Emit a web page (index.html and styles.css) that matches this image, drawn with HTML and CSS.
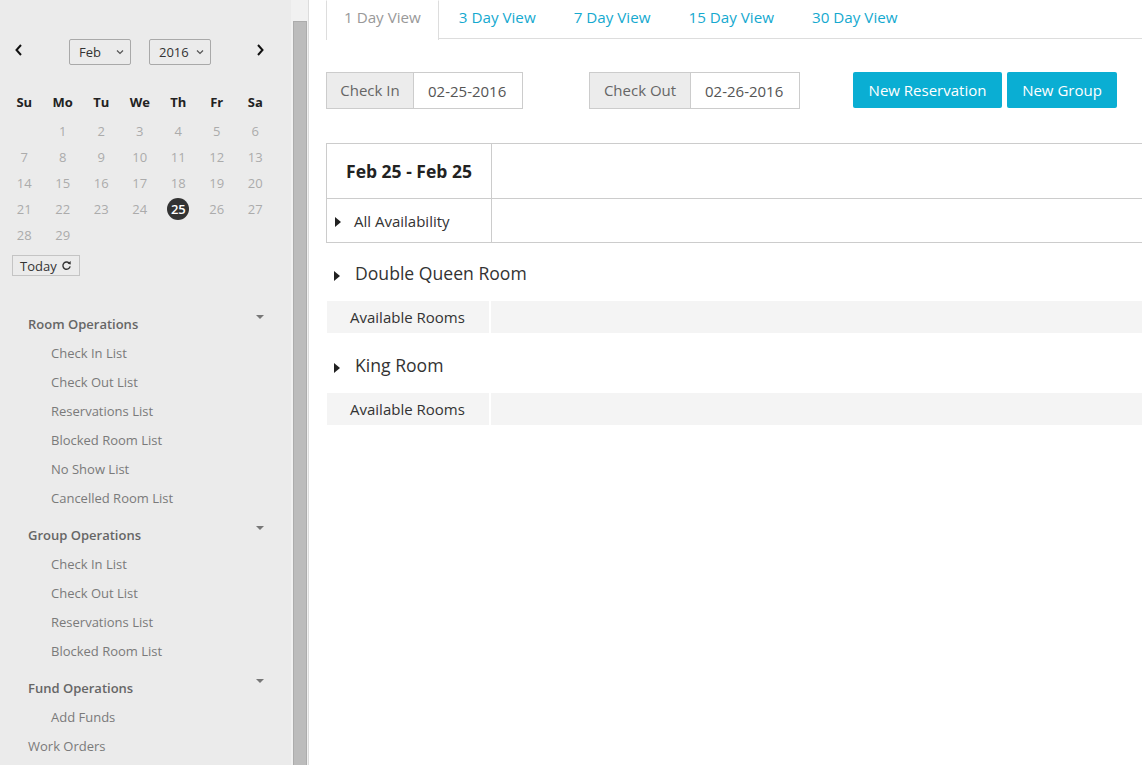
FILE: index.html
```html
<!DOCTYPE html>
<html>
<head>
<meta charset="utf-8">
<link rel="stylesheet" href="styles.css">
</head>
<body>
<div class="layout">
  <aside class="sidebar">
    <div class="cal-head">
      <svg class="nav-arrow" width="10" height="14" viewBox="0 0 10 14"><path d="M7 2 L2.5 7 L7 12" fill="none" stroke="#111" stroke-width="2"/></svg>
      <div class="select sel-month">Feb <svg width="8" height="6" viewBox="0 0 8 6"><path d="M1 1.5 L4 4.5 L7 1.5" fill="none" stroke="#555" stroke-width="1.2"/></svg></div>
      <div class="select sel-year">2016 <svg width="8" height="6" viewBox="0 0 8 6"><path d="M1 1.5 L4 4.5 L7 1.5" fill="none" stroke="#555" stroke-width="1.2"/></svg></div>
      <svg class="nav-arrow next" width="10" height="14" viewBox="0 0 10 14"><path d="M3 2 L7.5 7 L3 12" fill="none" stroke="#111" stroke-width="2"/></svg>
    </div>
    <div class="cal-grid">
      <div class="wd">Su</div><div class="wd">Mo</div><div class="wd">Tu</div><div class="wd">We</div><div class="wd">Th</div><div class="wd">Fr</div><div class="wd">Sa</div>
      <div class="d"></div><div class="d">1</div><div class="d">2</div><div class="d">3</div><div class="d">4</div><div class="d">5</div><div class="d">6</div>
      <div class="d">7</div><div class="d">8</div><div class="d">9</div><div class="d">10</div><div class="d">11</div><div class="d">12</div><div class="d">13</div>
      <div class="d">14</div><div class="d">15</div><div class="d">16</div><div class="d">17</div><div class="d">18</div><div class="d">19</div><div class="d">20</div>
      <div class="d">21</div><div class="d">22</div><div class="d">23</div><div class="d">24</div><div class="d"><span class="sel-day">25</span></div><div class="d">26</div><div class="d">27</div>
      <div class="d">28</div><div class="d">29</div>
    </div>
    <div class="today-btn">Today <svg width="11" height="11" viewBox="0 0 12 12"><path d="M9.6 4.2 A4 4 0 1 0 10 7" fill="none" stroke="#333" stroke-width="1.5"/><path d="M7.2 3.9 L10.6 4.9 L10.6 1.2 Z" fill="#333"/></svg></div>

    <nav class="menu">
      <div class="menu-head first"><span>Room Operations</span><i class="caret"></i></div>
      <div class="menu-item">Check In List</div>
      <div class="menu-item">Check Out List</div>
      <div class="menu-item">Reservations List</div>
      <div class="menu-item">Blocked Room List</div>
      <div class="menu-item">No Show List</div>
      <div class="menu-item">Cancelled Room List</div>
      <div class="menu-head"><span>Group Operations</span><i class="caret"></i></div>
      <div class="menu-item">Check In List</div>
      <div class="menu-item">Check Out List</div>
      <div class="menu-item">Reservations List</div>
      <div class="menu-item">Blocked Room List</div>
      <div class="menu-head"><span>Fund Operations</span><i class="caret"></i></div>
      <div class="menu-item">Add Funds</div>
      <div class="menu-link">Work Orders</div>
    </nav>
  </aside>
  <div class="scroll"><div class="thumb"></div></div>
  <main class="main">
    <ul class="tabs">
      <li class="tab active">1 Day View</li>
      <li class="tab">3 Day View</li>
      <li class="tab">7 Day View</li>
      <li class="tab">15 Day View</li>
      <li class="tab">30 Day View</li>
    </ul>
    <div class="toolbar">
      <div class="group g-in"><span class="addon a-in">Check In</span><span class="field">02-25-2016</span></div>
      <div class="group g-out"><span class="addon a-out">Check Out</span><span class="field">02-26-2016</span></div>
      <div class="btn b-res">New Reservation</div>
      <div class="btn b-grp">New Group</div>
    </div>
    <div class="avail-table">
      <div class="row r-head"><div class="c1 date">Feb 25 - Feb 25</div><div class="c2"></div></div>
      <div class="row r-all"><div class="c1"><i class="tri"></i>All Availability</div><div class="c2"></div></div>
    </div>
    <div class="room-title"><i class="tri"></i>Double Queen Room</div>
    <div class="band"><div class="b1">Available Rooms</div><div class="b2"></div></div>
    <div class="room-title"><i class="tri"></i>King Room</div>
    <div class="band"><div class="b1">Available Rooms</div><div class="b2"></div></div>
  </main>
</div>
</body>
</html>
```

FILE: styles.css
```css
* { box-sizing: border-box; }
html, body { margin: 0; padding: 0; }
body {
  font-family: "Open Sans", "DejaVu Sans", sans-serif;
  width: 1142px;
  height: 765px;
  overflow: hidden;
  background: #fff;
  color: #333;
}
.layout { display: flex; height: 765px; }

/* sidebar */
.sidebar {
  width: 291px;
  flex: none;
  background: #ebebeb;
  padding-top: 39px;
}
.cal-head {
  display: flex;
  align-items: center;
  height: 26px;
  padding-left: 14px;
}
.nav-arrow { display: block; margin-top: -4px; }
.nav-arrow.next { margin-left: 44px; }
.select {
  height: 26px;
  width: 62px;
  border: 1px solid #a9a9a9;
  border-radius: 2px;
  font-size: 13px;
  color: #333;
  display: flex;
  align-items: center;
  justify-content: space-between;
  padding: 0 6px 0 9px;
}
.select svg { display: block; }
.sel-month { margin-left: 45px; }
.sel-year { margin-left: 18px; }

.cal-grid {
  margin-top: 24px;
  margin-left: 5px;
  display: grid;
  grid-template-columns: repeat(7, 38.5px);
  grid-template-rows: 29px;
  grid-auto-rows: 26px;
}
.wd {
  font-size: 13px;
  font-weight: 700;
  color: #222;
  text-align: center;
  line-height: 27px;
}
.d {
  font-size: 13px;
  color: #ababab;
  text-align: center;
  line-height: 26px;
  display: flex;
  align-items: center;
  justify-content: center;
}
.sel-day {
  display: inline-block;
  width: 22px;
  height: 22px;
  border-radius: 50%;
  background: #333;
  color: #fff;
  line-height: 22px;
  font-weight: 600;
  letter-spacing: -0.3px;
}
.today-btn {
  margin: 7px 0 0 12px;
  width: 68px;
  height: 21px;
  border: 1px solid #c4c4c4;
  font-size: 13px;
  color: #333;
  display: flex;
  align-items: center;
  padding-left: 7px;
  gap: 4px;
}
.today-btn svg { display: block; }

.menu { margin-top: 34px; font-size: 13px; }
.menu-head {
  display: flex;
  justify-content: space-between;
  height: 29px;
  line-height: 29px;
  padding-left: 28px;
  padding-right: 27px;
  font-weight: 600;
  color: #666;
  margin-top: 8px;
}
.menu-head.first { margin-top: 0; }
.caret {
  width: 0; height: 0;
  border-top: 4px solid #777;
  border-left: 4px solid transparent;
  border-right: 4px solid transparent;
  margin-top: 5px;
}
.menu-item {
  height: 29px;
  line-height: 29px;
  padding-left: 51px;
  color: #7a7a7a;
}
.menu-link {
  height: 29px;
  line-height: 29px;
  padding-left: 28px;
  color: #7a7a7a;
}

/* scroll strip */
.scroll {
  width: 18px;
  flex: none;
  background: #f1f1f1;
  border-right: 1px solid #dcdcdc;
  padding: 21px 1px 0 2px;
}
.thumb {
  height: 100%;
  background: #bcbcbc;
  border: 1px solid #acacac;
  border-bottom: none;
}

/* main */
.main {
  flex: 1;
  min-width: 0;
  padding-left: 17px;
  overflow: hidden;
}
.tabs {
  list-style: none;
  margin: 0;
  padding: 0;
  display: flex;
  border-bottom: 1px solid #ddd;
  height: 39px;
}
.tab {
  font-size: 15.2px;
  color: #15a9cf;
  padding: 0 17px;
  height: 39px;
  line-height: 33px;
  margin-right: 2px;
  border: 1px solid transparent;
  border-bottom: none;
  white-space: nowrap;
}
.tab.active {
  color: #999;
  border-color: #ddd;
  background: #fff;
  border-top-color: transparent;
  height: 40px;
}

.toolbar {
  display: flex;
  align-items: flex-start;
  margin-top: 33px;
  height: 37px;
}
.group { display: flex; height: 37px; font-size: 15px; }
.addon {
  background: #ececec;
  border: 1px solid #ccc;
  color: #666;
  display: flex;
  align-items: center;
  justify-content: center;
  padding-bottom: 1px;
}
.a-in { width: 88px; }
.a-out { width: 102px; }
.field {
  width: 109px;
  border: 1px solid #ccc;
  border-left: none;
  color: #555;
  display: flex;
  align-items: center;
  padding-left: 14px;
}
.g-out { margin-left: 66px; }
.btn {
  height: 36px;
  background: #0aaed3;
  color: #fff;
  font-size: 15px;
  border-radius: 2px;
  display: flex;
  align-items: center;
  justify-content: center;
}
.b-res { width: 149px; margin-left: 53px; }
.b-grp { width: 110px; margin-left: 5px; }

.avail-table {
  margin-top: 34px;
  margin-right: -4px;
  margin-bottom: -1px;
  border: 1px solid #ccc;
}
.row { display: flex; }
.c1 {
  width: 165px;
  flex: none;
  border-right: 1px solid #ccc;
  display: flex;
  align-items: center;
}
.c2 { flex: 1; }
.r-head { height: 55px; border-bottom: 1px solid #ccc; }
.date {
  font-size: 17.5px;
  font-weight: 700;
  color: #222;
  justify-content: center;
}
.r-all { height: 43px; }
.r-all .c1 { font-size: 15px; color: #333; padding-left: 8px; }
.tri {
  display: inline-block;
  width: 0; height: 0;
  border-left: 6px solid #222;
  border-top: 5px solid transparent;
  border-bottom: 5px solid transparent;
  margin-right: 13px;
  margin-top: 3px;
}
.room-title {
  height: 59px;
  display: flex;
  align-items: center;
  padding-left: 8px;
  padding-top: 3px;
  font-size: 17.6px;
  color: #333;
}
.room-title .tri { margin-right: 15px; margin-top: 5px; }
.band {
  display: flex;
  height: 32px;
  margin-left: 1px;
  background: #f4f4f4;
  margin-bottom: 1px;
}
.b1 {
  width: 164px;
  flex: none;
  border-right: 2px solid #fff;
  font-size: 15px;
  color: #333;
  padding-left: 23px;
  display: flex;
  align-items: center;
}
.b2 { flex: 1; }
```
